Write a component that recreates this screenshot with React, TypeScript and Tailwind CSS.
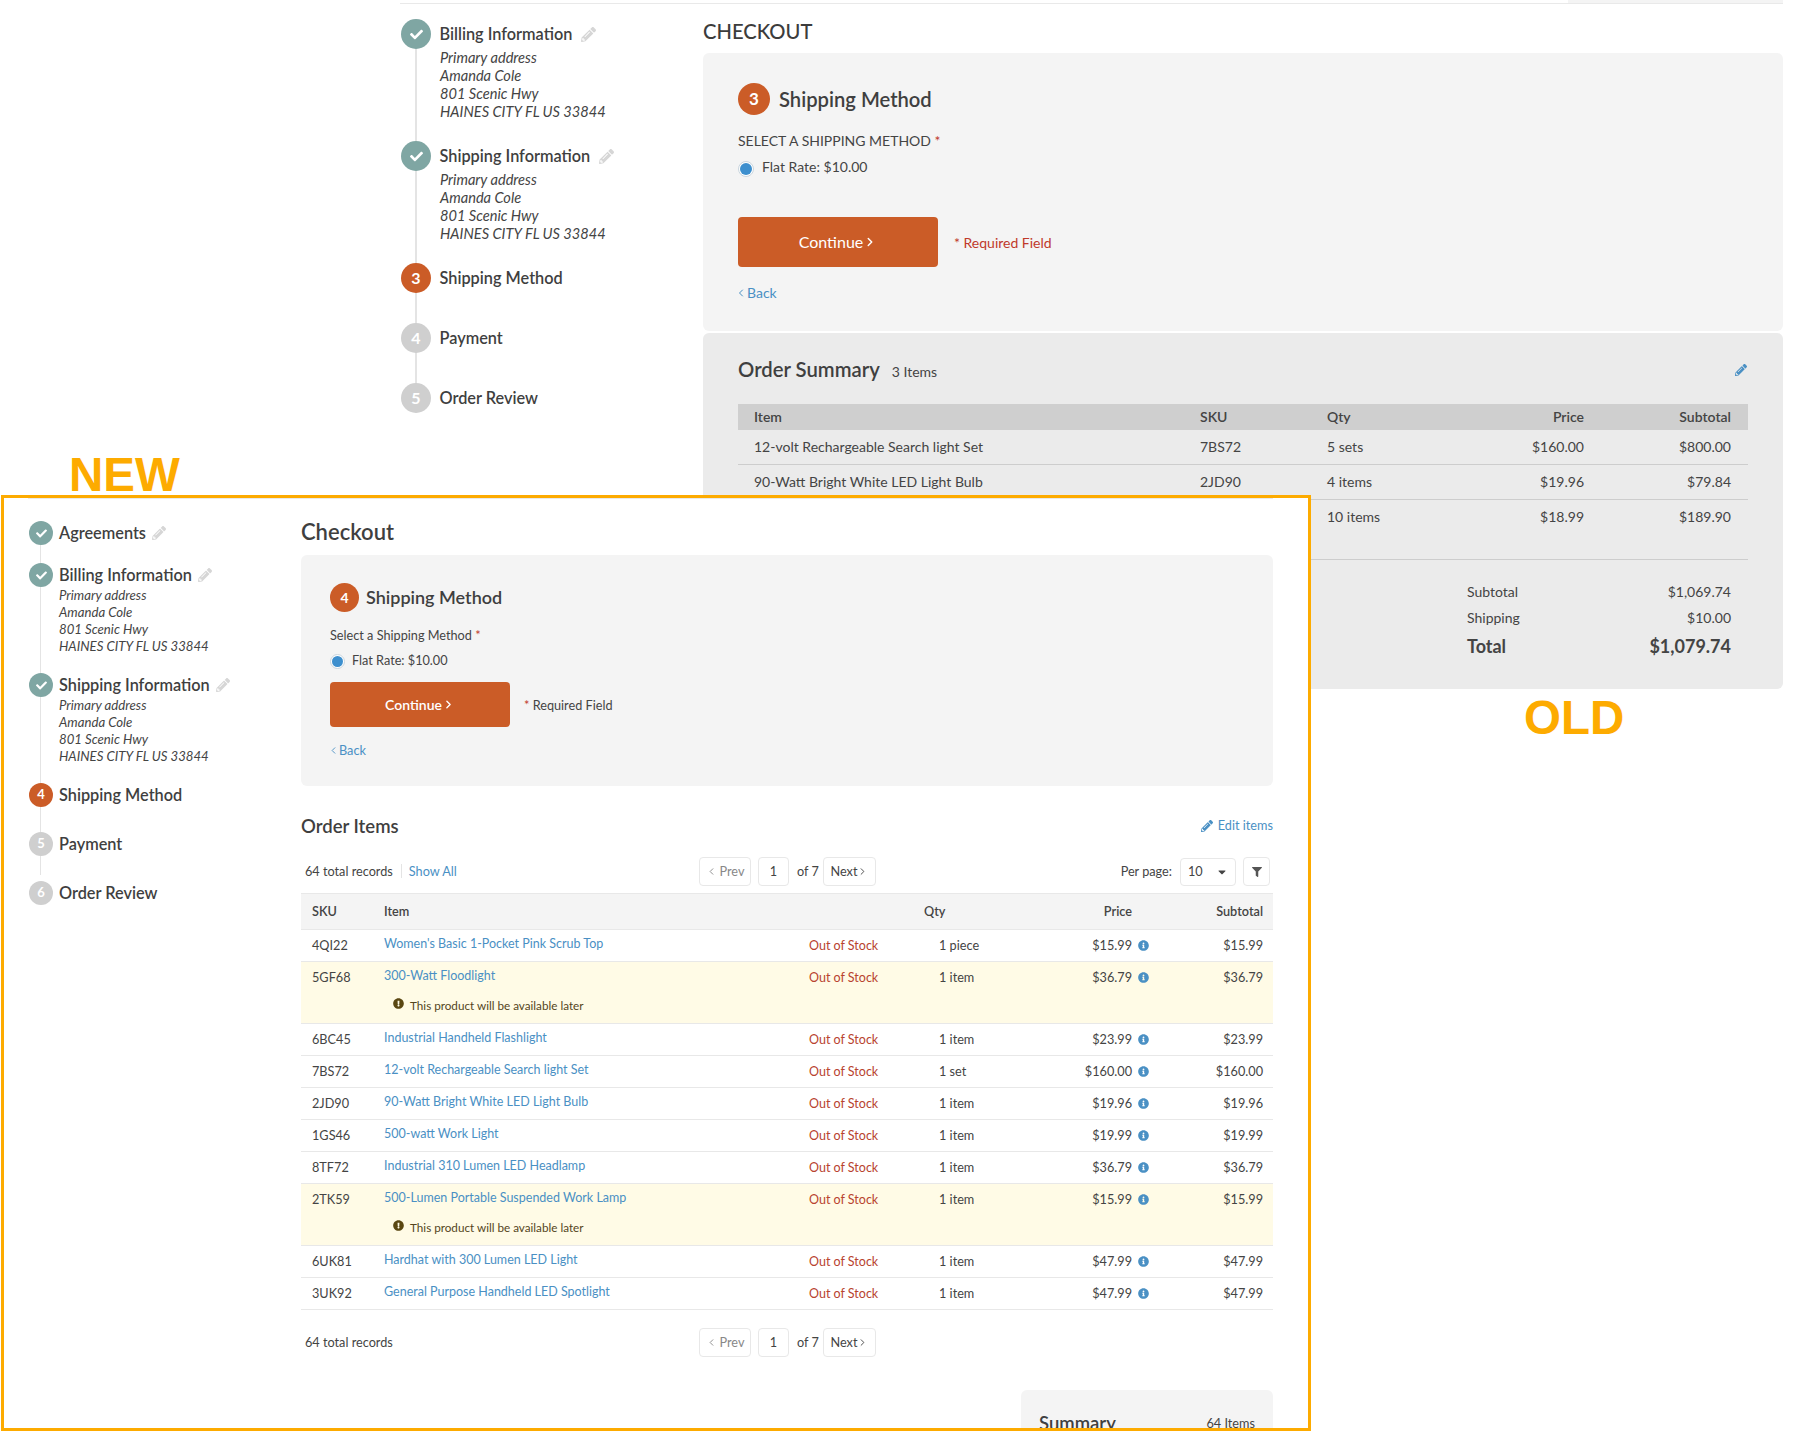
import React from "react";
import { ChevronLeft, ChevronRight } from "lucide-react";
import {
  FaCaretDown,
  FaCheck,
  FaExclamationCircle,
  FaFilter,
  FaInfoCircle,
  FaPencilAlt,
} from "react-icons/fa";

type StepState = "done" | "current" | "todo";

interface Step {
  label: string;
  state: StepState;
  num?: number;
  address?: boolean;
  gap: string;
}

const ADDRESS = [
  "Primary address",
  "Amanda Cole",
  "801 Scenic Hwy",
  "HAINES CITY FL US 33844",
];

const oldSteps: Step[] = [
  { label: "Billing Information", state: "done", address: true, gap: "mb-[20px]" },
  { label: "Shipping Information", state: "done", address: true, gap: "mb-[20px]" },
  { label: "Shipping Method", state: "current", num: 3, gap: "mb-[30px]" },
  { label: "Payment", state: "todo", num: 4, gap: "mb-[30px]" },
  { label: "Order Review", state: "todo", num: 5, gap: "" },
];

const newSteps: Step[] = [
  { label: "Agreements", state: "done", gap: "mb-[18px]" },
  { label: "Billing Information", state: "done", address: true, gap: "mb-[18px]" },
  { label: "Shipping Information", state: "done", address: true, gap: "mb-[18px]" },
  { label: "Shipping Method", state: "current", num: 4, gap: "mb-[25px]" },
  { label: "Payment", state: "todo", num: 5, gap: "mb-[25px]" },
  { label: "Order Review", state: "todo", num: 6, gap: "" },
];

const circleColor: Record<StepState, string> = {
  done: "bg-[#7fa6a3]",
  current: "bg-[#cb5c27]",
  todo: "bg-[#cfcfcf]",
};

const oldRows = [
  ["12-volt Rechargeable Search light Set", "7BS72", "5 sets", "$160.00", "$800.00"],
  ["90-Watt Bright White LED Light Bulb", "2JD90", "4 items", "$19.96", "$79.84"],
  ["", "", "10 items", "$18.99", "$189.90"],
];

const items = [
  { sku: "4QI22", name: "Women's Basic 1-Pocket Pink Scrub Top", qty: "1 piece", price: "$15.99" },
  { sku: "5GF68", name: "300-Watt Floodlight", qty: "1 item", price: "$36.79", later: true },
  { sku: "6BC45", name: "Industrial Handheld Flashlight", qty: "1 item", price: "$23.99" },
  { sku: "7BS72", name: "12-volt Rechargeable Search light Set", qty: "1 set", price: "$160.00" },
  { sku: "2JD90", name: "90-Watt Bright White LED Light Bulb", qty: "1 item", price: "$19.96" },
  { sku: "1GS46", name: "500-watt Work Light", qty: "1 item", price: "$19.99" },
  { sku: "8TF72", name: "Industrial 310 Lumen LED Headlamp", qty: "1 item", price: "$36.79" },
  { sku: "2TK59", name: "500-Lumen Portable Suspended Work Lamp", qty: "1 item", price: "$15.99", later: true },
  { sku: "6UK81", name: "Hardhat with 300 Lumen LED Light", qty: "1 item", price: "$47.99" },
  { sku: "3UK92", name: "General Purpose Handheld LED Spotlight", qty: "1 item", price: "$47.99" },
];

const OldStepper = () => (
  <div className="relative">
    <div className="absolute left-[14px] top-[20px] h-[360px] w-[2px] bg-[#e4e4e4]" />
    {oldSteps.map((step) => (
      <div key={step.label} className={`relative ${step.gap}`}>
        <div className="flex h-[30px] items-center gap-[8.5px]">
          <span
            className={`flex h-[30px] w-[30px] shrink-0 items-center justify-center rounded-full text-[16px] font-bold text-white ${circleColor[step.state]}`}
          >
            {step.state === "done" ? <FaCheck className="h-[13px] w-[13px]" /> : step.num}
          </span>
          <span className="text-[16.3px] font-semibold text-[#3f3f3f]">{step.label}</span>
          {step.state === "done" && <FaPencilAlt className="h-[15px] w-[15px] text-[#d6d6d6]" />}
        </div>
        {step.address && (
          <div className="pl-[39px] text-[14.6px] leading-[18px] text-[#444] italic">
            {ADDRESS.map((line) => (
              <div key={line}>{line}</div>
            ))}
          </div>
        )}
      </div>
    ))}
  </div>
);

const OldWindow = () => (
  <div className="absolute left-[400px] top-0 w-[1383px] text-[14px] text-[#444]">
    <div className="relative h-[4px] border-b border-[#e9e9e9]">
      <div className="absolute right-0 top-0 h-[3px] w-[215px] bg-[#f4f4f4]" />
    </div>
    <div className="flex">
      <div className="w-[303px] pl-px pt-[15px]">
        <OldStepper />
      </div>
      <div className="w-[1080px]">
        <h1 className="h-[49px] pt-[13px] text-[20.2px] leading-[28px] font-medium text-[#3c3c3c]">CHECKOUT</h1>
        <section className="h-[278px] rounded-md bg-[#f4f4f4] pl-[35px] pt-[30px]">
          <div className="flex h-[32px] items-center gap-[9px]">
            <span className="flex h-[32px] w-[32px] items-center justify-center rounded-full bg-[#cb5c27] text-[17px] font-bold text-white">
              3
            </span>
            <span className="text-[20.2px] font-semibold text-[#3f3f3f]">Shipping Method</span>
          </div>
          <div className="mt-[17px] leading-[18px]">
            SELECT A SHIPPING METHOD <span className="text-[#c0392b]">*</span>
          </div>
          <div className="mt-[7px] flex h-[18px] items-center gap-[8px]">
            <span className="mt-[5px] flex h-[16px] w-[16px] items-center justify-center rounded-full border border-[#c9d5de] bg-white">
              <span className="h-[12px] w-[12px] rounded-full bg-[#3d8fce]" />
            </span>
            <span>Flat Rate: $10.00</span>
          </div>
          <div className="mt-[42px] flex items-center gap-[16px]">
            <button className="flex h-[50px] w-[200px] items-center justify-center rounded bg-[#cb5c27] text-[16px] text-white">
              Continue
              <ChevronRight className="h-[14px] w-[14px]" strokeWidth={2.5} />
            </button>
            <span className="text-[#c0392b]">* Required Field</span>
          </div>
          <div className="mt-[17px] flex items-center leading-[18px] text-[#4a90c4]">
            <ChevronLeft className="-ml-[3px] h-[12px] w-[12px]" strokeWidth={2} />
            <span>Back</span>
          </div>
        </section>
        <section className="mt-[2px] h-[356px] rounded-md bg-[#ebebeb] px-[35px] pt-[22px]">
          <div className="flex h-[28px] items-center">
            <span className="text-[20.3px] font-semibold text-[#3f3f3f]">Order Summary</span>
            <span className="ml-[12px] mt-[5px]">3 Items</span>
            <FaPencilAlt className="ml-auto mr-px mt-[1px] h-[12px] w-[12px] text-[#4a90c4]" />
          </div>
          <div className="mt-[21px] grid h-[26px] grid-cols-[462px_127px_100px_157px_147px] items-center bg-[#cfcfcf] pb-[2px] font-semibold">
            <span className="pl-4">Item</span>
            <span>SKU</span>
            <span>Qty</span>
            <span className="text-right">Price</span>
            <span className="text-right">Subtotal</span>
          </div>
          {oldRows.map((row, i) => (
            <div
              key={i}
              className={`grid h-[35px] grid-cols-[462px_127px_100px_157px_147px] items-center pb-[2px] ${
                i < 2 ? "border-b border-[#cdcdcd]" : ""
              }`}
            >
              <span className="pl-4">{row[0]}</span>
              <span>{row[1]}</span>
              <span>{row[2]}</span>
              <span className="text-right">{row[3]}</span>
              <span className="text-right">{row[4]}</span>
            </div>
          ))}
          <div className="mt-[24px] border-t border-[#cdcdcd] pl-[729px] pr-[17px] pt-[22px]">
            <div className="flex h-[18px] items-center justify-between">
              <span>Subtotal</span>
              <span>$1,069.74</span>
            </div>
            <div className="mt-[8px] flex h-[18px] items-center justify-between">
              <span>Shipping</span>
              <span>$10.00</span>
            </div>
            <div className="mt-[10px] flex h-[20px] items-center justify-between text-[18px] font-bold">
              <span>Total</span>
              <span>$1,079.74</span>
            </div>
          </div>
        </section>
      </div>
    </div>
  </div>
);

const NewStepper = () => (
  <div className="relative">
    <div className="absolute left-[11px] top-[14px] h-[340px] w-px bg-[#e4e4e4]" />
    {newSteps.map((step) => (
      <div key={step.label} className={`relative ${step.gap}`}>
        <div className="flex h-[24px] items-center gap-[6px]">
          <span
            className={`flex h-[24px] w-[24px] shrink-0 items-center justify-center rounded-full text-[13px] font-bold text-white ${circleColor[step.state]}`}
          >
            {step.state === "done" ? <FaCheck className="h-[11px] w-[11px]" /> : step.num}
          </span>
          <span className="text-[16.3px] font-semibold text-[#3f3f3f]">{step.label}</span>
          {step.state === "done" && <FaPencilAlt className="h-[14px] w-[14px] text-[#d6d6d6]" />}
        </div>
        {step.address && (
          <div className="pl-[30px] text-[13.2px] leading-[17px] text-[#444] italic">
            {ADDRESS.map((line) => (
              <div key={line}>{line}</div>
            ))}
          </div>
        )}
      </div>
    ))}
  </div>
);

const Pagination = () => (
  <div className="flex items-center">
    <span className="flex h-[29px] w-[52px] items-center justify-center gap-[3px] rounded border border-[#e8e8e8] text-[#888]">
      <ChevronLeft className="h-[11px] w-[11px]" strokeWidth={2} />
      Prev
    </span>
    <span className="ml-[7px] flex h-[29px] w-[31px] items-center justify-center rounded border border-[#e8e8e8]">
      1
    </span>
    <span className="ml-[8px] w-[26px]">of 7</span>
    <span className="flex h-[29px] w-[53px] items-center justify-center rounded border border-[#e8e8e8]">
      Next
      <ChevronRight className="h-[11px] w-[11px]" strokeWidth={2} />
    </span>
  </div>
);

const ItemRows = () => (
  <>
    {items.map((item) => (
      <div
        key={item.sku}
        className={`grid grid-cols-[83px_425px_115px_108px_117px_124px] items-start border-b border-[#e8e8e8] ${
          item.later ? "h-[62px] bg-[#fffbe6]" : "h-[32px]"
        }`}
      >
        <span className="pl-[11px] pt-[6px] leading-[18px]">{item.sku}</span>
        <div className="pt-[4px] leading-[18px]">
          <span className="text-[12.5px] text-[#4a90c4]">{item.name}</span>
          {item.later && (
            <div className="ml-[9px] mt-[11px] flex items-center gap-[6px] text-[11.7px] text-[#54451c]">
              <FaExclamationCircle className="mb-[3px] h-[11px] w-[11px] text-[#5a4712]" />
              This product will be available later
            </div>
          )}
        </div>
        <span className="pt-[7px] text-[12.5px] leading-[18px] text-[#b8432f]">Out of Stock</span>
        <span className="pl-[15px] pt-[6px] leading-[18px]">{item.qty}</span>
        <div className="flex items-center justify-end gap-[6px] pt-[6px] leading-[18px]">
          {item.price}
          <FaInfoCircle className="h-[11px] w-[11px] text-[#4a90c4]" />
        </div>
        <span className="pr-[10px] pt-[6px] text-right leading-[18px]">{item.price}</span>
      </div>
    ))}
  </>
);

const NewWindow = () => (
  <div className="absolute left-px top-[495px] h-[936px] w-[1310px] overflow-hidden border-[3px] border-[#fdab00] bg-white text-[12.7px] text-[#444]">
    <div className="ml-[24px] h-px w-[1245px] bg-[#e9e9e9]" />
    <div className="flex">
      <div className="w-[297px] pl-[25px] pt-[22px]">
        <NewStepper />
      </div>
      <div className="w-[972px]">
        <h1 className="flex h-[56px] items-center pt-[9px] text-[22px] font-semibold text-[#3f3f3f]">Checkout</h1>
        <section className="h-[231px] rounded-md bg-[#f4f4f4] pl-[29px] pt-[28px]">
          <div className="flex h-[29px] items-center gap-[7px]">
            <span className="flex h-[29px] w-[29px] items-center justify-center rounded-full bg-[#cb5c27] text-[14px] font-bold text-white">
              4
            </span>
            <span className="text-[18px] font-semibold text-[#3f3f3f]">Shipping Method</span>
          </div>
          <div className="mt-[14px] leading-[18px]">
            Select a Shipping Method <span className="text-[#c0392b]">*</span>
          </div>
          <div className="mt-[9px] flex h-[16px] items-center gap-[7px]">
            <span className="flex h-[15px] w-[15px] items-center justify-center rounded-full border border-[#c9d5de] bg-white">
              <span className="h-[11px] w-[11px] rounded-full bg-[#3d8fce]" />
            </span>
            <span>Flat Rate: $10.00</span>
          </div>
          <div className="mt-[13px] flex items-center gap-[14px]">
            <button className="flex h-[45px] w-[180px] items-center justify-center rounded bg-[#cb5c27] pb-px text-[14px] font-semibold text-white">
              Continue
              <ChevronRight className="h-[13px] w-[13px]" strokeWidth={2.5} />
            </button>
            <span className="mt-[2px]">
              <span className="text-[#c0392b]">*</span> Required Field
            </span>
          </div>
          <div className="mt-[14px] flex items-center leading-[18px] text-[#4a90c4]">
            <ChevronLeft className="-ml-[2px] h-[11px] w-[11px]" strokeWidth={2} />
            <span>Back</span>
          </div>
        </section>

        <div className="mt-[27px] flex h-[24px] items-center justify-between">
          <h2 className="pt-[3px] text-[18.5px] font-semibold text-[#3f3f3f]">Order Items</h2>
          <span className="mt-[2px] flex items-center gap-[5px] text-[#4a90c4]">
            <FaPencilAlt className="h-[12px] w-[12px]" />
            Edit items
          </span>
        </div>

        <div className="mt-[20px] flex h-[29px] items-center">
          <div className="flex w-[398px] items-center pl-[4px]">
            <span>64 total records</span>
            <span className="ml-[8px] h-[14px] w-px bg-[#e4e4e4]" />
            <span className="ml-[7px] text-[#4a90c4]">Show All</span>
          </div>
          <Pagination />
          <div className="ml-auto flex items-center pr-[3px]">
            <span className="mr-[8px]">Per page:</span>
            <span className="flex h-[28px] w-[56px] items-center justify-between rounded border border-[#e8e8e8] px-[7px]">
              10
              <FaCaretDown className="h-[12px] w-[12px] text-[#444]" />
            </span>
            <span className="ml-[7px] flex h-[29px] w-[27px] items-center justify-center rounded border border-[#e8e8e8]">
              <FaFilter className="h-[10px] w-[10px] text-[#555]" />
            </span>
          </div>
        </div>

        <div className="mt-[7px] grid h-[37px] grid-cols-[83px_425px_115px_108px_117px_124px] items-center border-y border-[#e8e8e8] bg-[#f4f4f4] font-semibold">
          <span className="pl-[11px]">SKU</span>
          <span>Item</span>
          <span />
          <span>Qty</span>
          <span className="pr-[17px] text-right">Price</span>
          <span className="pr-[10px] text-right">Subtotal</span>
        </div>
        <ItemRows />

        <div className="mt-[18px] flex h-[29px] items-center">
          <div className="w-[398px] pl-[4px]">64 total records</div>
          <Pagination />
        </div>

        <aside className="ml-[720px] mt-[33px] h-[80px] rounded-md bg-[#f4f4f4] px-[18px] pt-[20px]">
          <div className="flex items-center justify-between">
            <span className="text-[18.5px] font-semibold text-[#3f3f3f]">Summary</span>
            <span>64 Items</span>
          </div>
        </aside>
      </div>
    </div>
  </div>
);

const App = () => (
  <div className="relative h-[1432px] w-[1807px] overflow-hidden bg-white font-[Lato,sans-serif]">
    <OldWindow />
    <span className="absolute left-[69px] top-[450px] font-['Liberation_Sans',sans-serif] text-[47.5px] leading-[50px] font-bold text-[#fdab00]">
      NEW
    </span>
    <span className="absolute left-[1524px] top-[693px] font-['Liberation_Sans',sans-serif] text-[47.5px] leading-[50px] font-bold text-[#fdab00]">
      OLD
    </span>
    <NewWindow />
  </div>
);

export default App;
